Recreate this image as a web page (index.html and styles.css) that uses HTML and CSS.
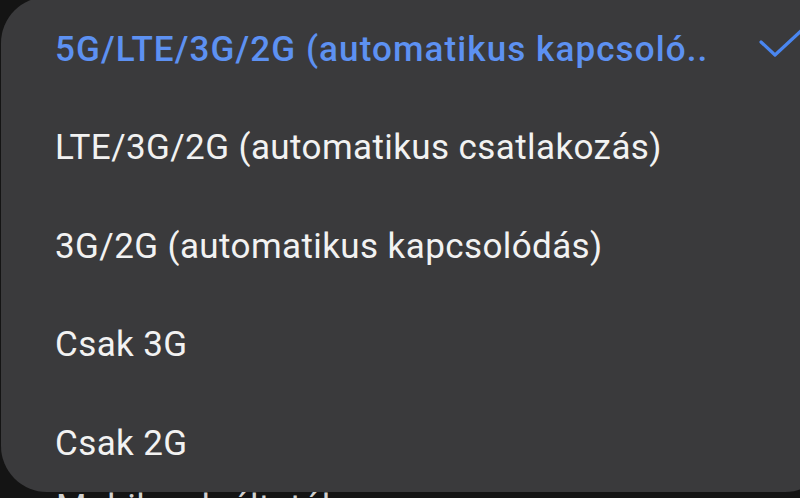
FILE: index.html
```html
<!DOCTYPE html>
<html lang="hu">
<head>
<meta charset="utf-8">
<link rel="stylesheet" href="styles.css">
</head>
<body>
<div class="page">
  <div class="under">Mobilszolgáltatók</div>
</div>
<div class="popup">
  <div class="item selected">
    <span class="label">5G/LTE/3G/2G (automatikus kapcsoló..</span>
    <svg class="check" width="46" height="34" viewBox="0 0 46 34"><polyline points="3,14 17,27 44,2" fill="none" stroke="#4a86f0" stroke-width="3.2" stroke-linecap="round" stroke-linejoin="round"/></svg>
  </div>
  <div class="item"><span class="label">LTE/3G/2G (automatikus csatlakozás)</span></div>
  <div class="item"><span class="label">3G/2G (automatikus kapcsolódás)</span></div>
  <div class="item"><span class="label">Csak 3G</span></div>
  <div class="item"><span class="label">Csak 2G</span></div>
</div>
</body>
</html>
```
FILE: styles.css
```css
html, body {
  margin: 0;
  padding: 0;
  width: 800px;
  height: 498px;
  overflow: hidden;
  background: #141414;
  font-family: Roboto, "Noto Sans", sans-serif;
}
.page {
  height: 498px;
  box-sizing: border-box;
  overflow: hidden;
  padding: 488px 0 0 56px;
}
.under {
  font-size: 35px;
  letter-spacing: 0.4px;
  color: #d0d0d0;
  line-height: 40px;
}
.popup {
  position: absolute;
  top: -3px;
  left: 1px;
  width: 830px;
  height: 495px;
  box-sizing: border-box;
  padding-top: 3px;
  background: #3a3a3c;
  border-radius: 46px;
}
.item {
  height: 98.5px;
  display: flex;
  align-items: center;
  padding-left: 54px;
  font-size: 35px;
  letter-spacing: 0.4px;
  color: #f2f2f2;
  position: relative;
}
.label {
  white-space: nowrap;
}
.selected {
  color: #5d91f2;
  font-weight: 500;
  letter-spacing: 1.1px;
}
.check {
  position: absolute;
  left: 757px;
  top: 28px;
}
```
